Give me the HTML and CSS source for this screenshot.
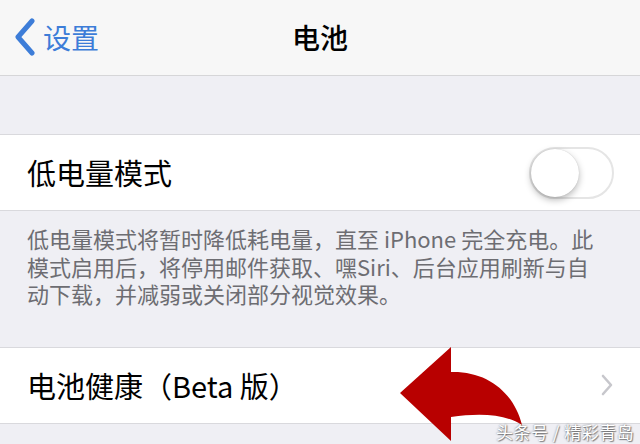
FILE: index.html
```html
<!DOCTYPE html>
<html lang="zh-CN">
<head>
<meta charset="utf-8">
<link rel="stylesheet" href="styles.css">
</head>
<body>
<div class="screen">
  <header class="nav">
    <div class="back">
      <svg class="back-icon" width="24" height="38" viewBox="0 0 24 38"><path d="M19 3 L5 19 L19 35" fill="none" stroke="#3d7dd8" stroke-width="5" stroke-linecap="round" stroke-linejoin="round"/></svg>
      <span class="back-text">设置</span>
    </div>
    <div class="title">电池</div>
    <div></div>
  </header>
  <div class="gap"></div>
  <div class="row">
    <span class="label">低电量模式</span>
    <span class="toggle"><span class="knob"></span></span>
  </div>
  <p class="footer">低电量模式将暂时降低耗电量，直至 iPhone 完全充电。此<br>模式启用后，将停用邮件获取、嘿Siri、后台应用刷新与自<br>动下载，并减弱或关闭部分视觉效果。</p>
  <div class="row">
    <span class="label">电池健康（Beta 版）</span>
    <svg class="chev" width="14" height="22" viewBox="0 0 14 22"><path d="M3 2 L11 11 L3 20" fill="none" stroke="#c7c7cc" stroke-width="2.6" stroke-linecap="round" stroke-linejoin="round"/></svg>
  </div>
  <svg class="arrow" width="640" height="444" viewBox="0 0 640 444"><path d="M400 393 L451 347 L451 372 C488 371 514 393 522 425 C505 414 480 413 451 417 L451 441 Z" fill="#b80000"/></svg>
  <div class="watermark">头条号 / 精彩青岛</div>
</div>
</body>
</html>
```
FILE: styles.css
```css
* { box-sizing: border-box; }
html, body { margin: 0; padding: 0; }
body {
  background: #efeff4;
  font-family: "Noto Sans CJK SC", "Noto Sans", sans-serif;
}
.screen {
  position: relative;
  width: 640px;
  height: 444px;
  overflow: hidden;
  background: #efeff4;
}
.nav {
  height: 76px;
  background: #f7f7f7;
  border-bottom: 1px solid #d6d6d8;
  display: grid;
  grid-template-columns: 1fr auto 1fr;
  align-items: center;
  padding-bottom: 1px;
}
.back {
  display: flex;
  align-items: center;
  padding-left: 13px;
  gap: 6px;
}
.back-text {
  color: #3d7dd8;
  font-size: 28px;
  line-height: 1;
}
.title {
  font-size: 28px;
  font-weight: 500;
  color: #000;
  line-height: 1;
}
.gap { height: 58px; }
.row {
  height: 77px;
  background: #fff;
  border-top: 1px solid #d9d9dd;
  border-bottom: 1px solid #d9d9dd;
  display: flex;
  align-items: center;
  justify-content: space-between;
  padding: 0 26px 0 27px;
}
.label {
  font-size: 29px;
  color: #000;
  line-height: 1;
}
.toggle {
  width: 85px;
  height: 52px;
  border-radius: 26px;
  border: 2px solid #e5e5e5;
  background: #fff;
  position: relative;
  margin-right: 0;
}
.knob {
  position: absolute;
  left: 0;
  top: 0;
  width: 48px;
  height: 48px;
  border-radius: 50%;
  background: #fff;
  box-shadow: 0 3px 7px rgba(0,0,0,0.28), 0 0 1px rgba(0,0,0,0.2);
}
.footer {
  margin: 0;
  padding: 14px 20px 39px 27px;
  font-size: 22px;
  line-height: 27.5px;
  color: #6d6d72;
  white-space: nowrap;
}
.chev { margin-right: 0; }
.arrow {
  position: absolute;
  left: 0;
  top: 0;
}
.watermark {
  position: absolute;
  left: 496px;
  top: 421px;
  font-size: 17px;
  line-height: 22px;
  color: #fff;
  text-shadow: 0 0 2px rgba(0,0,0,0.55), 1px 1px 1px rgba(0,0,0,0.4);
  letter-spacing: 0.5px;
}
```
